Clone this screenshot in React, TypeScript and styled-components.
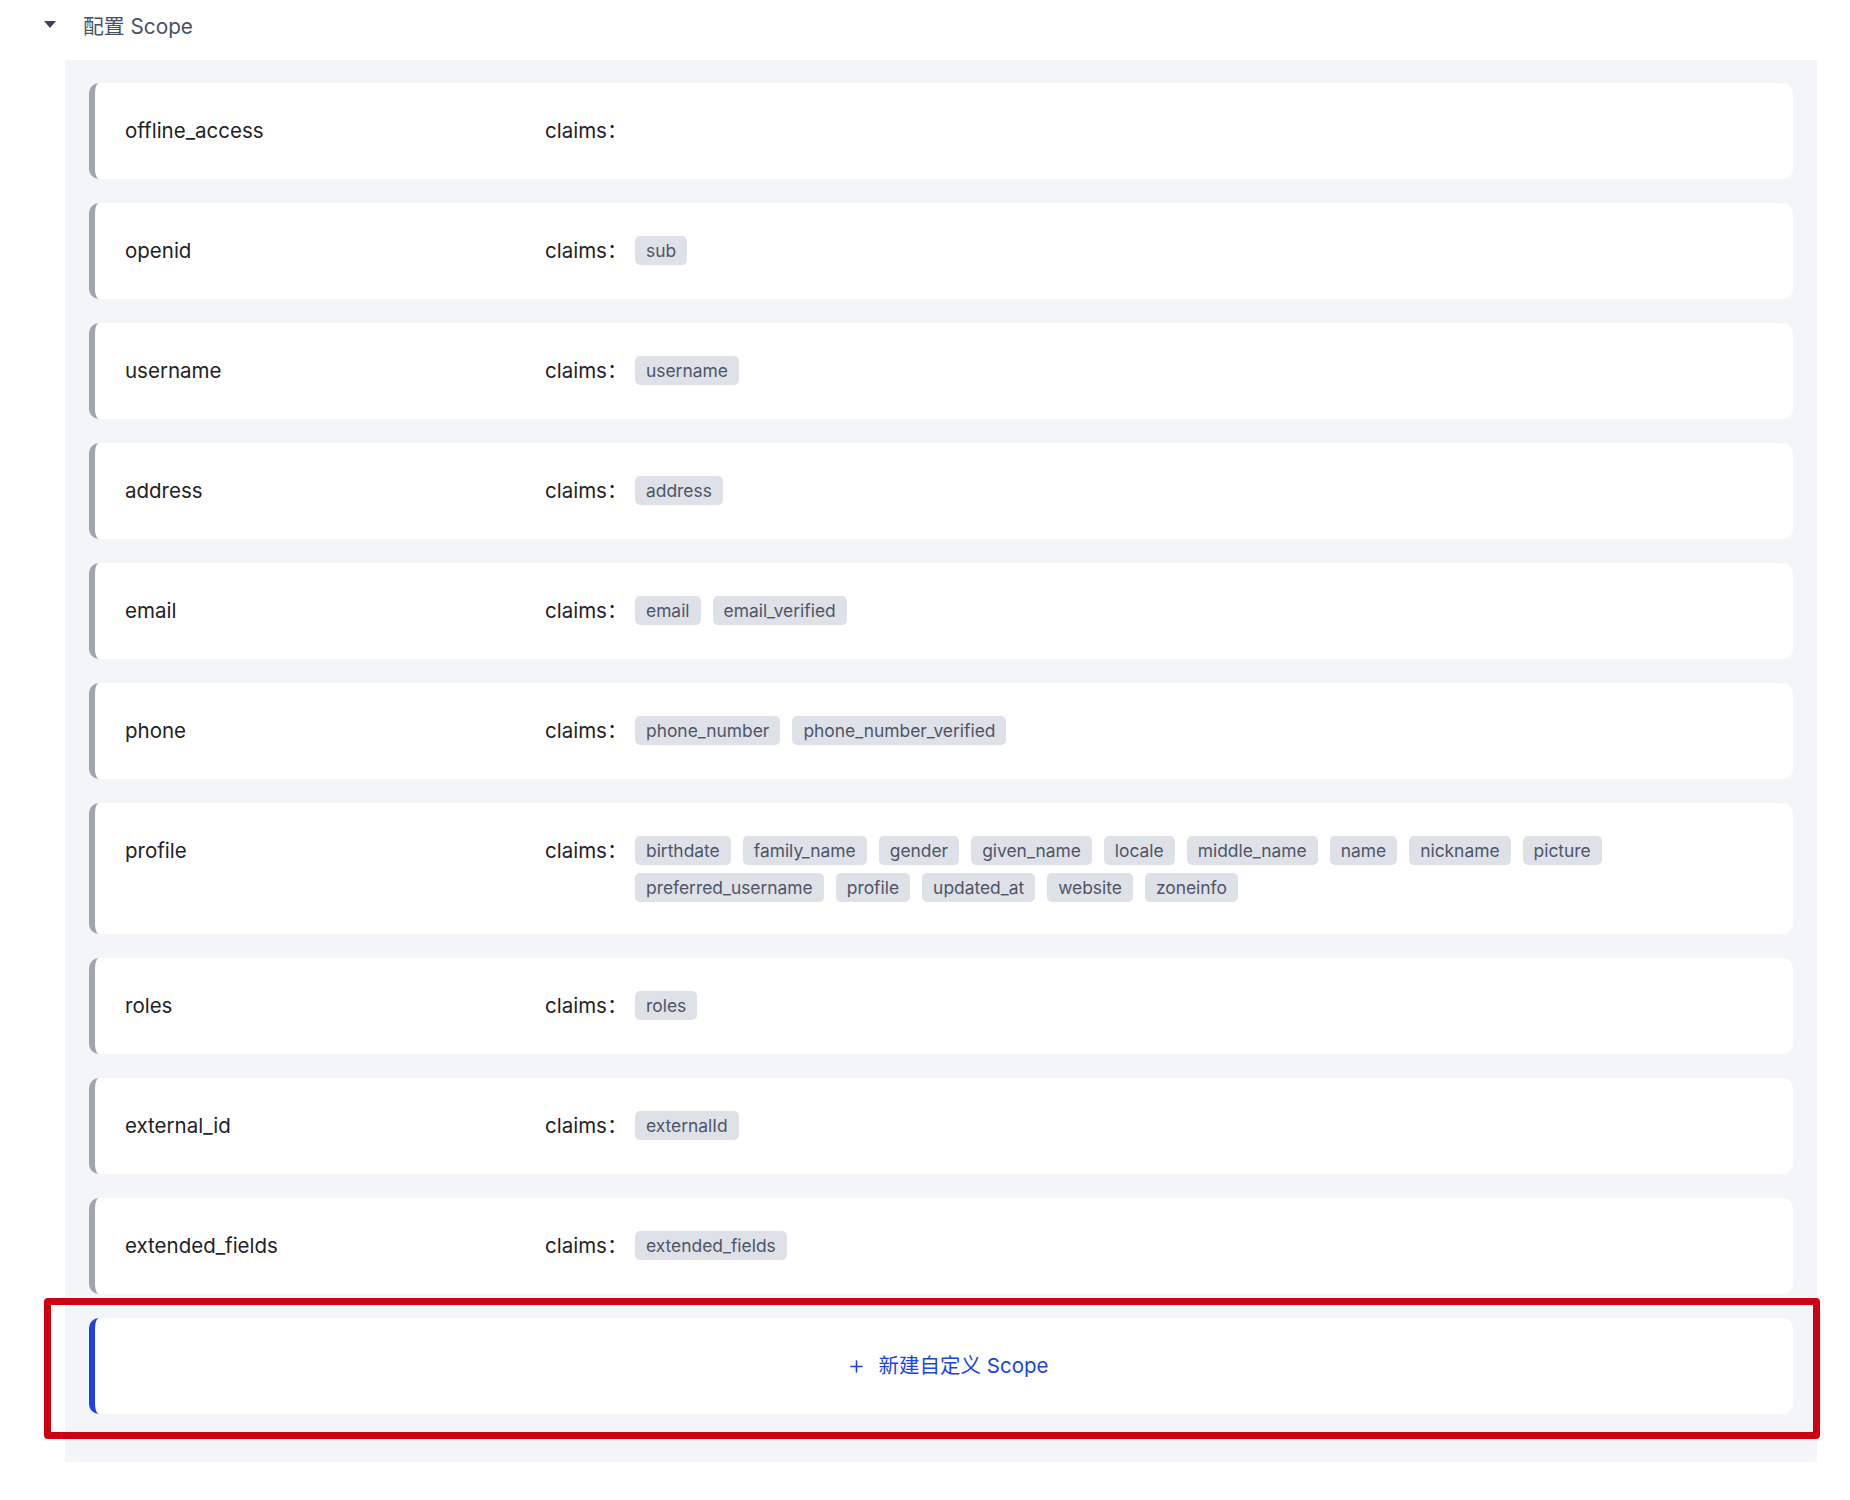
import React from 'react'
import styled, { createGlobalStyle } from 'styled-components'

interface Scope {
  name: string
  claims: string[]
}

const scopes: Scope[] = [
  { name: 'offline_access', claims: [] },
  { name: 'openid', claims: ['sub'] },
  { name: 'username', claims: ['username'] },
  { name: 'address', claims: ['address'] },
  { name: 'email', claims: ['email', 'email_verified'] },
  { name: 'phone', claims: ['phone_number', 'phone_number_verified'] },
  {
    name: 'profile',
    claims: [
      'birthdate',
      'family_name',
      'gender',
      'given_name',
      'locale',
      'middle_name',
      'name',
      'nickname',
      'picture',
      'preferred_username',
      'profile',
      'updated_at',
      'website',
      'zoneinfo',
    ],
  },
  { name: 'roles', claims: ['roles'] },
  { name: 'external_id', claims: ['externalId'] },
  { name: 'extended_fields', claims: ['extended_fields'] },
]

const GlobalStyle = createGlobalStyle`
  html, body {
    margin: 0;
    padding: 0;
    background: #ffffff;
  }
  body {
    font-family: Inter, "Noto Sans CJK SC", sans-serif;
    color: #1f2329;
  }
`

const App: React.FC = () => {
  return (
    <Page>
      <GlobalStyle />
      <Header>
        <Caret viewBox="0 0 12 8">
          <polygon points="0,0 12,0 6,7" fill="#3d4452" />
        </Caret>
        <Title>配置 Scope</Title>
      </Header>
      <Panel>
        {scopes.map(scope => (
          <ScopeCard key={scope.name}>
            <ScopeName>{scope.name}</ScopeName>
            <ClaimsLabel>claims：</ClaimsLabel>
            <Tags>
              {scope.claims.map(claim => (
                <Tag key={claim}>{claim}</Tag>
              ))}
            </Tags>
          </ScopeCard>
        ))}
        <AddCard $accent>
          <Highlight />
          <AddButton>
            <PlusIcon viewBox="0 0 14 14">
              <path d="M7 1v12M1 7h12" stroke="currentColor" strokeWidth="1.7" strokeLinecap="round" />
            </PlusIcon>
            新建自定义 Scope
          </AddButton>
        </AddCard>
      </Panel>
    </Page>
  )
}

const Page = styled.div`
  width: 1850px;
  padding-bottom: 39px;
`

const Header = styled.div`
  display: flex;
  align-items: center;
  height: 50px;
  margin-bottom: 10px;
  padding-left: 44px;
`

const Caret = styled.svg`
  width: 12px;
  height: 8px;
`

const Title = styled.span`
  margin-left: 27px;
  font-size: 20.8px;
  color: #4b5261;
`

const Panel = styled.div`
  margin-left: 65px;
  width: 1752px;
  box-sizing: border-box;
  padding: 23px 24px 48px;
  background: #f4f5f9;
  display: flex;
  flex-direction: column;
  gap: 24px;
`

const ScopeCard = styled.div<{ $accent?: boolean }>`
  position: relative;
  display: flex;
  align-items: flex-start;
  background: #ffffff;
  border-radius: 10px;
  border-left: 6px solid ${p => (p.$accent ? '#1c44e4' : '#a1a5b0')};
  padding: 32px 30px;
  min-height: 32px;
`

const ScopeName = styled.div`
  width: 420px;
  flex-shrink: 0;
  font-size: 20.5px;
  line-height: 32px;
  color: #1f2329;
`

const ClaimsLabel = styled.div`
  width: 90px;
  flex-shrink: 0;
  font-size: 20.5px;
  line-height: 32px;
  color: #1f2329;
`

const Tags = styled.div`
  display: flex;
  flex-wrap: wrap;
  gap: 8px 12px;
  padding-top: 1px;
  max-width: 1130px;
`

const Tag = styled.span`
  display: inline-block;
  height: 29px;
  line-height: 29px;
  padding: 0 11px;
  border-radius: 5px;
  background: #dfe1e8;
  color: #4e5566;
  font-size: 17.4px;
`

const AddCard = styled(ScopeCard)`
  justify-content: center;
`

const Highlight = styled.div`
  position: absolute;
  top: -20px;
  bottom: -25px;
  left: -51px;
  right: -27px;
  border: 7px solid #cc0011;
  border-radius: 4px;
  pointer-events: none;
`

const AddButton = styled.div`
  display: flex;
  align-items: center;
  gap: 16px;
  margin-left: 10px;
  font-size: 20.5px;
  line-height: 32px;
  color: #1c44e4;
`

const PlusIcon = styled.svg`
  width: 13px;
  height: 13px;
`

export default App
